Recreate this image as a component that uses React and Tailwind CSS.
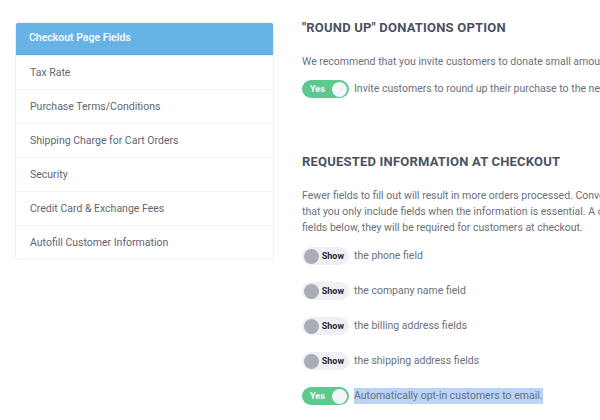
import React from "react";

const menu = [
  "Checkout Page Fields",
  "Tax Rate",
  "Purchase Terms/Conditions",
  "Shipping Charge for Cart Orders",
  "Security",
  "Credit Card & Exchange Fees",
  "Autofill Customer Information",
];

function YesToggle() {
  return (
    <div className="flex items-center shrink-0 w-[47px] h-[18px] rounded-full bg-[#5cc98f] pl-[8px] pr-[2px] justify-between">
      <span className="text-[9px] font-bold text-white leading-none">Yes</span>
      <span className="w-[15px] h-[15px] rounded-full bg-[#f4f5f8]" />
    </div>
  );
}

function ShowToggle() {
  return (
    <div className="flex items-center shrink-0 w-[47px] h-[18px] rounded-full bg-[#eff0f5] pl-[2px] pr-[5px] justify-between">
      <span className="w-[15px] h-[15px] rounded-full bg-[#a9adb5]" />
      <span className="text-[9px] font-bold text-[#1f2937] leading-none">Show</span>
    </div>
  );
}

export default function App() {
  return (
    <div className="w-[600px] h-[420px] overflow-hidden bg-white flex font-['Roboto',sans-serif]">
      <div className="w-[302px] shrink-0 pl-[15px] pt-[22px] pr-[28px]">
        <div className="rounded-[3px] border border-[#f0f1f3] overflow-hidden">
          {menu.map((m, i) => (
            <div
              key={m}
              className={
                i === 0
                  ? "h-[33px] flex items-center px-[14px] bg-[#68b3e6] border-b border-[#5aa8de] text-white text-[10.5px] font-medium -mx-px -mt-px"
                  : "h-[34px] flex items-center px-[14px] text-[#5f6670] text-[10.5px] border-t border-[#f3f4f6] first:border-t-0"
              }
            >
              {m}
            </div>
          ))}
        </div>
      </div>
      <div className="flex-1 min-w-0 overflow-hidden whitespace-nowrap text-[10.5px] leading-[16px] text-[#6b7079]">
        <div className="mt-[20px] text-[13px] leading-[16px] font-bold text-[#4a5160] tracking-[0.2px]">"ROUND UP" DONATIONS OPTION</div>
        <div className="mt-[18px]">We recommend that you invite customers to donate small amounts to your cause.</div>
        <div className="mt-[10px] flex items-center gap-[5px]">
          <YesToggle />
          <span>Invite customers to round up their purchase to the nearest dollar.</span>
        </div>
        <div className="mt-[56px] text-[13px] leading-[16px] font-bold text-[#4a5160] tracking-[0.2px]">REQUESTED INFORMATION AT CHECKOUT</div>
        <div className="mt-[18px]">
          <div>Fewer fields to fill out will result in more orders processed. Conversion is key, so we suggest</div>
          <div>that you only include fields when the information is essential. A checkmark appears on any of the</div>
          <div>fields below, they will be required for customers at checkout.</div>
        </div>
        <div className="mt-[11px] flex flex-col gap-[17px]">
          {[
            "the phone field",
            "the company name field",
            "the billing address fields",
            "the shipping address fields",
          ].map((t) => (
            <div key={t} className="flex items-center gap-[5px]">
              <ShowToggle />
              <span>{t}</span>
            </div>
          ))}
          <div className="flex items-center gap-[5px]">
            <YesToggle />
            <span className="bg-[#b9d4f7]">Automatically opt-in customers to email.</span>
          </div>
        </div>
      </div>
    </div>
  );
}
